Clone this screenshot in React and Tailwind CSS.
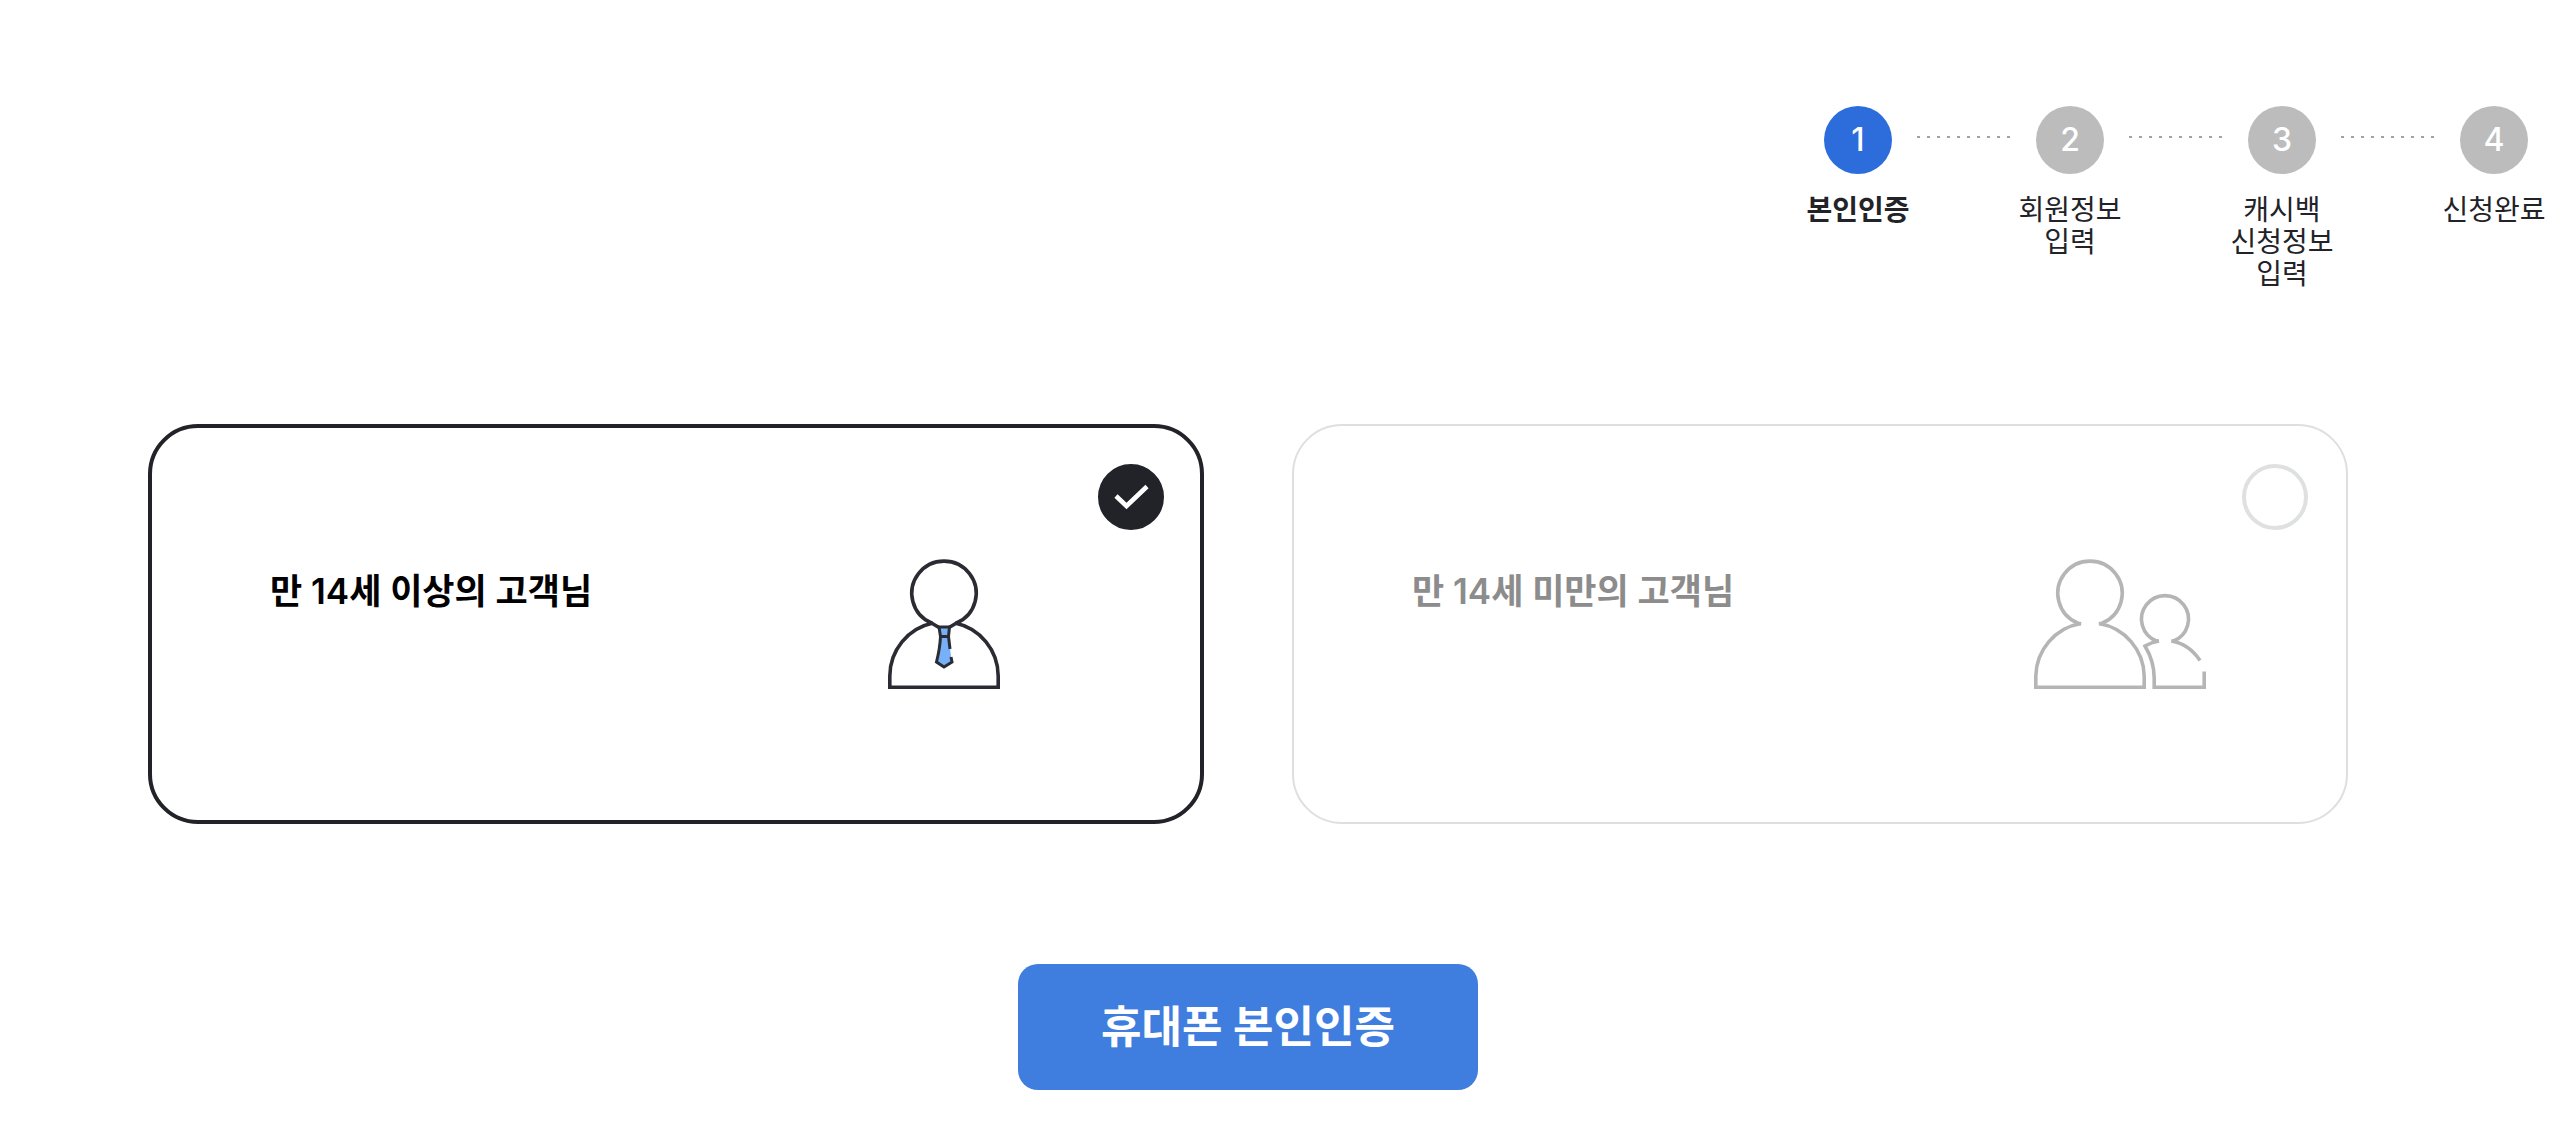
import React, { useState } from 'react';

const STEPS = [
  { no: 1, lines: ['본인인증'] },
  { no: 2, lines: ['회원정보', '입력'] },
  { no: 3, lines: ['캐시백', '신청정보', '입력'] },
  { no: 4, lines: ['신청완료'] },
];

const AdultIcon = () => (
  <svg width="112" height="130" viewBox="0 0 112 130" fill="none" stroke="#2b2c33" strokeWidth="3.6" aria-hidden="true">
    <path d="M51 68.5L43.5 64A32.2 32.2 0 1 1 68.5 64L61 68.5" />
    <path d="M45 64A54.2 54.2 0 0 0 1.8 117V128.2H110.2V117A54.2 54.2 0 0 0 67 64" />
    <path d="M51 68H61.5L60 77.5L62.5 93L63.5 103L56 108.5L48.5 103.5L52.5 77.5Z" fill="#76b0f8" stroke="none" />
    <path d="M62 90L60.5 77.5L61.5 68H51L52.5 77.5H60.5M52.5 77.5C52 88 50.5 95 48.5 103L56 108L64 103L63 98" strokeWidth="3" />
  </svg>
);

const FamilyIcon = () => (
  <svg width="172" height="130" viewBox="0 0 172 130" fill="none" stroke="#b5b5b5" strokeWidth="3.6" aria-hidden="true">
    <path d="M47 65L43.5 64A32.2 32.2 0 1 1 68.5 64L65 65" />
    <path d="M47 64.5A54.2 54.2 0 0 0 1.8 117V128.2H110.2V117A54.2 54.2 0 0 0 65 64.5" />
    <path d="M125 82H122.5A23.5 23.5 0 1 1 139.5 82H137.5" />
    <path d="M125 82C119 83 115 84.5 111 87C117 97 120.2 108 120.2 119V128.2H170.2V112.5" />
    <path d="M137.5 82C149 84 159 91 166 101.500" />
  </svg>
);

const OPTIONS = [
  { id: 'over14', label: '만 14세 이상의 고객님', icon: <AdultIcon /> },
  { id: 'under14', label: '만 14세 미만의 고객님', icon: <FamilyIcon /> },
];

function StepList({ current }) {
  return (
    <ol className="flex justify-end">
      {STEPS.map((step, i) => (
        <li key={step.no} className="flex">
          {i > 0 && (
            <div className="w-[100px] pt-[30px] pl-[3px]">
              <span className="block w-[93px] h-[2px] bg-[repeating-linear-gradient(90deg,#a3a3a3_0_3px,transparent_3px_10px)]" />
            </div>
          )}
          <div className="w-28 flex flex-col items-center">
            <span className={`w-[68px] h-[68px] rounded-full flex items-center justify-center text-white text-[32px] leading-8 font-medium ${step.no === current ? 'bg-[#2c6cdb]' : 'bg-[#bcbcbc]'}`}>
              {step.no}
            </span>
            <p className={`mt-5 text-[28px] leading-8 text-center text-[#222329] ${step.no === current ? 'font-bold' : 'font-normal'}`}>
              {step.lines.map(line => <span key={line} className="block whitespace-nowrap">{line}</span>)}
            </p>
          </div>
        </li>
      ))}
    </ol>
  );
}

function AgeCard({ option, checked, onSelect }) {
  return (
    <label htmlFor={option.id} className="relative flex cursor-pointer">
      <span className={`flex-1 min-h-[400px] rounded-[50px] flex items-center pl-[118px] pr-28 ${checked ? 'border-4 border-[#222329]' : 'border-2 border-[#dfdfdf]'}`}>
        <span className={`flex-1 h-[130px] text-[35px] leading-[64px] font-semibold ${checked ? 'text-black' : 'text-[#8c8c8c]'}`}>{option.label}</span>
        <span className="w-[200px]">{option.icon}</span>
      </span>
      <span className="absolute top-10 right-10 w-[66px] h-[66px]">
        <input
          type="radio"
          id={option.id}
          name="age"
          checked={checked}
          onChange={() => onSelect(option.id)}
          className="block appearance-none w-full h-full rounded-full border-4 border-[#dfe0e1] checked:border-[#222329] checked:bg-[#222329]"
        />
        {checked && (
          <svg className="absolute inset-0 pointer-events-none" width="66" height="66" viewBox="0 0 66 66" fill="none" stroke="#fff" strokeWidth="4.6" aria-hidden="true">
            <path d="M18 32L28.5 42L49 22.500" />
          </svg>
        )}
      </span>
    </label>
  );
}

export default function App() {
  const [selected, setSelected] = useState('over14');

  return (
    <main className="bg-white pt-[106px] pb-14 font-['Inter','Noto_Sans_CJK_KR',sans-serif]">
      <StepList current={1} />
      <form onSubmit={e => e.preventDefault()} className="mt-[134px] pl-[148px] pr-[202px] flex flex-col items-center">
        <div className="w-full grid grid-cols-2 gap-[88px]">
          {OPTIONS.map(option => (
            <AgeCard key={option.id} option={option} checked={selected === option.id} onSelect={setSelected} />
          ))}
        </div>
        <button type="submit" className="mt-[140px] w-[460px] h-[126px] rounded-[20px] bg-[#3f7edf] text-white text-[44px] font-bold">
          휴대폰 본인인증
        </button>
      </form>
    </main>
  );
}
